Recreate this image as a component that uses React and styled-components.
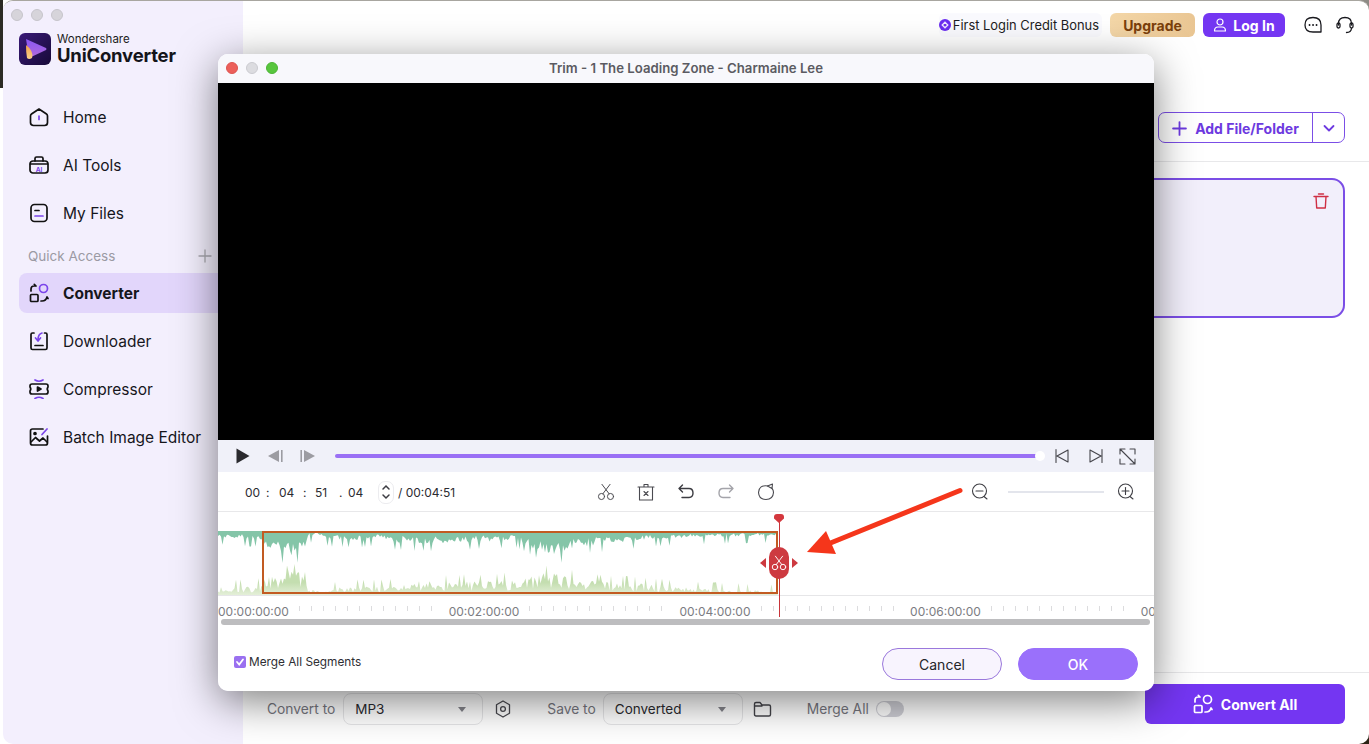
import React from 'react'
import styled, { createGlobalStyle } from 'styled-components'

const GlobalStyle = createGlobalStyle`
  html, body { margin: 0; padding: 0; height: 100%; overflow: hidden; }
  * { box-sizing: border-box; }
  body { font-family: Inter, "Liberation Sans", sans-serif; color: #16161a; }
`

const Page = styled.div`
  position: relative;
  width: 1369px;
  height: 744px;
  overflow: hidden;
  padding-left: 3px;
  background:
    linear-gradient(#2c2b24, #2c2b24) 0 0 / 3px 88px no-repeat,
    linear-gradient(#2c2415, #2c2415) 100% 100% / 12px 12px no-repeat,
    linear-gradient(#8d8b85, #8d8b85) 100% 0 / 12px 12px no-repeat,
    #fff;
`
const AppWindow = styled.div`
  display: flex;
  width: 1366px;
  height: 744px;
  border-radius: 10px;
  border-top: 1px solid #a8a6a0;
  overflow: hidden;
  background: #fff;
`
const Sidebar = styled.aside`
  width: 240px;
  flex: none;
  background: #f3effd;
  display: flex;
  flex-direction: column;
  padding: 8px 0 0 16px;
`
const Traffic = styled.div`
  display: flex;
  gap: 8px;
  margin-left: -8px;
`
const Dot = styled.span`
  width: ${p => p.$size || 12}px;
  height: ${p => p.$size || 12}px;
  border-radius: 50%;
  background: ${p => p.$color || '#d6d4da'};
  border: 1px solid ${p => p.$edge || '#c6c4cb'};
`
const Brand = styled.div`
  display: flex;
  gap: 6px;
  align-items: center;
  margin-top: 12px;
  height: 32px;
`
const BrandText = styled.div`
  display: flex;
  flex-direction: column;
  line-height: 1;
`
const BrandTop = styled.span`
  font-size: 11.5px;
  color: #1c1c22;
  margin-bottom: 1px;
`
const BrandName = styled.span`
  font-size: 18.5px;
  font-weight: 700;
  letter-spacing: -0.2px;
  color: #14141a;
`
const Nav = styled.nav`
  display: flex;
  flex-direction: column;
  margin-top: 28px;
`
const NavItem = styled.div`
  display: flex;
  align-items: center;
  gap: 14px;
  height: ${p => (p.$active ? 40 : 48)}px;
  margin: ${p => (p.$active ? '0 0 4px' : '0')};
  padding-left: 10px;
  border-radius: 8px 0 0 8px;
  font-size: 15.5px;
  font-weight: ${p => (p.$active ? 700 : 400)};
  background: ${p => (p.$active ? '#e2d6fb' : 'transparent')};
  color: #16161c;
`
const SectionRow = styled.div`
  display: flex;
  justify-content: space-between;
  align-items: center;
  height: 30px;
  margin: 4px 0 2px;
  padding: 0 31px 0 9px;
  font-size: 13.5px;
  color: #9b9aa3;
`
const Main = styled.main`
  flex: 1;
  display: flex;
  flex-direction: column;
  min-width: 0;
`
const TopBar = styled.header`
  display: flex;
  align-items: center;
  justify-content: flex-end;
  height: 48px;
  padding-right: 15px;
`
const BonusPill = styled.div`
  display: flex;
  align-items: center;
  gap: 2px;
  height: 24px;
  padding: 0 3px 0 0;
  border-radius: 6px;
  font-size: 12.9px;
  color: #1d1d22;
  background: #fafafe;
`
const Upgrade = styled.button`
  width: 85px;
  height: 24px;
  margin-left: 8px;
  border: 0;
  border-radius: 6px;
  font: 700 14px Inter, sans-serif;
  color: #7a3f0c;
  background: linear-gradient(100deg, #f4d7a8, #e9c592);
`
const LogIn = styled.button`
  display: flex;
  align-items: center;
  justify-content: center;
  gap: 6px;
  width: 82px;
  height: 24px;
  margin-left: 8px;
  border: 0;
  border-radius: 6px;
  font: 700 14px Inter, sans-serif;
  color: #fff;
  background: #7436f2;
`
const TopIcons = styled.div`
  display: flex;
  gap: 14px;
  margin-left: 19px;
`
const Toolbar = styled.div`
  display: flex;
  align-items: flex-end;
  justify-content: flex-end;
  height: 113px;
  padding: 0 24px 18px 0;
  border-bottom: 1px solid #e8e8ea;
`
const AddGroup = styled.div`
  display: flex;
  height: 31px;
  width: 187px;
  border: 1.5px solid #7b4ee6;
  border-radius: 7px;
  color: #6d3ae0;
`
const AddMain = styled.div`
  flex: 1;
  display: flex;
  align-items: center;
  justify-content: center;
  gap: 8px;
  padding-top: 1px;
  font-size: 14px;
  font-weight: 700;
  border-right: 1px solid #7b4ee6;
`
const AddMore = styled.div`
  width: 31px;
  display: flex;
  align-items: center;
  justify-content: center;
`
const Content = styled.div`
  flex: 1;
  padding: 16px 24px 0;
`
const FileCard = styled.div`
  display: flex;
  justify-content: flex-end;
  height: 140px;
  padding: 13px 14px;
  border: 2px solid #7b4ee6;
  border-radius: 13px;
  background: #f2effb;
`
const BottomBar = styled.footer`
  display: flex;
  justify-content: space-between;
  align-items: flex-start;
  height: 72px;
  padding: 11px 24px 0;
  border-top: 1px solid #e8e8ea;
`
const BottomLeft = styled.div`
  display: flex;
  align-items: center;
  margin-top: 9px;
  height: 32px;
  font-size: 13.8px;
  color: #77777f;
`
const Select = styled.div`
  display: flex;
  align-items: center;
  justify-content: space-between;
  width: 140px;
  height: 32px;
  margin-left: ${p => p.$gap}px;
  padding: 0 16px 0 11px;
  border: 1px solid #e6e6e8;
  border-radius: 8px;
  font-size: 13.5px;
  color: #2b2b30;
`
const Caret = styled.span`
  width: 0;
  height: 0;
  border-left: 4.5px solid transparent;
  border-right: 4.5px solid transparent;
  border-top: 5px solid #85858c;
`
const BarIcon = styled.span`
  display: flex;
  margin-left: ${p => p.$left}px;
  margin-right: ${p => p.$right}px;
`
const Toggle = styled.span`
  position: relative;
  display: block;
  width: 28px;
  height: 16px;
  margin-left: 7px;
  border-radius: 8px;
  background: #cfcfd6;
  &::after {
    content: '';
    position: absolute;
    left: 1px;
    top: 1px;
    width: 14px;
    height: 14px;
    border-radius: 50%;
    background: #fff;
  }
`
const ConvertAll = styled.button`
  display: flex;
  align-items: center;
  justify-content: center;
  gap: 8px;
  width: 200px;
  height: 40px;
  border: 0;
  border-radius: 6px;
  font: 700 14px Inter, sans-serif;
  color: #fff;
  background: #7436f2;
`

/* trim dialog, floats over the app window */
const Modal = styled.section`
  position: absolute;
  left: 218px;
  top: 54px;
  width: 936px;
  height: 637px;
  display: flex;
  flex-direction: column;
  border-radius: 10px;
  overflow: hidden;
  background: #fff;
`
const ModalShadow = styled.div`
  position: absolute;
  left: 218px;
  top: 54px;
  width: 936px;
  height: 637px;
  border-radius: 10px;
  box-shadow: 0 10px 42px rgba(0, 0, 0, 0.5);
`
const TitleBar = styled.div`
  position: relative;
  height: 29px;
  flex: none;
  display: flex;
  align-items: center;
  justify-content: center;
  padding-bottom: 1px;
  background: #f8f8fc;
  font-size: 13.2px;
  font-weight: 600;
  color: #5b5b62;
`
const ModalDots = styled.div`
  position: absolute;
  left: 8px;
  top: 8px;
  display: flex;
  gap: 8px;
`
const Video = styled.div`
  height: 357px;
  flex: none;
  background: #000;
`
const Controls = styled.div`
  height: 32px;
  flex: none;
  display: flex;
  align-items: center;
  padding-left: 18px;
  background: #f0f1f9;
`
const StepGroup = styled.div`
  display: flex;
  align-items: center;
  gap: 17px;
  margin-left: 17px;
`
const Progress = styled.div`
  position: relative;
  width: 705px;
  height: 4px;
  margin: 0 14px 0 19px;
  border-radius: 2px;
  background: #9a70f5;
  &::after {
    content: '';
    position: absolute;
    right: -5px;
    top: -3px;
    width: 10px;
    height: 10px;
    border-radius: 50%;
    background: #fff;
  }
`
const IconGroup = styled.div`
  display: flex;
  align-items: center;
  gap: ${p => p.$gap}px;
`
const FullSlot = styled.span`
  display: flex;
  margin-left: 15px;
`
const TimeRow = styled.div`
  height: 40px;
  flex: none;
  display: flex;
  align-items: center;
  padding: 1px 19px 0 0;
  border-bottom: 1px solid #e8e8ea;
`
const TimeLeft = styled.div`
  width: 379px;
  display: flex;
  align-items: center;
  padding-left: 27px;
  font-size: 12px;
  color: #2b2b30;
`
const TimeCell = styled.span`
  width: ${p => p.$w}px;
`
const Spinner = styled.div`
  display: flex;
  align-items: center;
  justify-content: center;
  width: 16px;
  height: 23px;
  margin: 0 4px 0 8px;
  border: 1px solid #ececef;
  border-radius: 7px;
`
const ZoomTools = styled.div`
  margin-left: auto;
  display: flex;
  align-items: center;
`
const ZoomTrack = styled.div`
  width: 96px;
  height: 2px;
  margin: 0 13px 0 19px;
  background: #e3e5ec;
`
const Timeline = styled.div`
  position: relative;
  flex: none;
  height: 105px;
  padding-top: 19px;
`
const WaveBox = styled.div`
  height: 65px;
  border-bottom: 1px solid #e6e6e8;
`
const Ruler = styled.div`
  display: flex;
  height: 21px;
  overflow: hidden;
`
const RulerCell = styled.div`
  flex: none;
  width: 230.7px;
  display: flex;
  align-items: center;
  font-size: 12px;
  color: #7c7c82;
  padding-top: 9px;
`
const RulerTicks = styled.div`
  flex: 1;
  height: 5px;
  margin: -5px 8px 0 10px;
  background: repeating-linear-gradient(90deg, #dcdcde 0 1px, transparent 1px 12px);
`
const Selection = styled.div`
  position: absolute;
  left: 44px;
  top: 19px;
  width: 516px;
  height: 63px;
  border: 2px solid #c25b22;
`
const PlayLine = styled.div`
  position: absolute;
  left: 561px;
  top: 4px;
  bottom: 0;
  width: 1px;
  background: #c8343a;
`
const PlayPin = styled.div`
  position: absolute;
  left: 556px;
  top: 2px;
  width: 10px;
  height: 9px;
  border-radius: 3px 3px 0 0;
  background: #d4383e;
  clip-path: polygon(0 0, 100% 0, 100% 50%, 50% 100%, 0 50%);
`
const Handle = styled.div`
  position: absolute;
  left: 551px;
  top: 35px;
  width: 20px;
  height: 32px;
  border-radius: 10px;
  display: flex;
  align-items: center;
  justify-content: center;
  background: #cd3a40;
`
const HandleArrow = styled.span`
  position: absolute;
  top: 46px;
  left: ${p => p.$left}px;
  width: 0;
  height: 0;
  border-top: 5px solid transparent;
  border-bottom: 5px solid transparent;
  ${p => (p.$dir === 'left' ? 'border-right: 6px solid #cd3a40;' : 'border-left: 6px solid #cd3a40;')}
`
const Scroll = styled.div`
  flex: none;
  height: 6px;
  margin: 2px 4px 0 3px;
  border-radius: 3px;
  background: #bdbdbf;
`
const ModalFooter = styled.div`
  flex: 1;
  display: flex;
  align-items: center;
  justify-content: space-between;
  padding: 0 16px 0 16px;
`
const MergeLabel = styled.label`
  display: flex;
  align-items: center;
  gap: 3px;
  font-size: 11.8px;
  color: #2e2e33;
  margin-top: 8px;
`
const CheckBox = styled.span`
  display: flex;
  align-items: center;
  justify-content: center;
  width: 12px;
  height: 12px;
  border-radius: 2px;
  background: #9a70f0;
`
const FooterButtons = styled.div`
  display: flex;
  gap: 16px;
  margin-top: 12px;
`
const PillButton = styled.button`
  width: 120px;
  height: 32px;
  border-radius: 16px;
  font: 400 14px Inter, sans-serif;
  color: ${p => (p.$primary ? '#fff' : '#25252a')};
  background: ${p => (p.$primary ? '#9a70fb' : '#f8f4fe')};
  border: 1px solid ${p => (p.$primary ? '#9a70fb' : '#9a78dc')};
  font-weight: ${p => (p.$primary ? 500 : 400)};
`
const Annotation = styled.svg`
  position: absolute;
  left: 800px;
  top: 484px;
`

const Ico = ({ size = 20, sw = 1.7, color = 'currentColor', children, box = 20 }) => (
  <svg width={size} height={size} viewBox={`0 0 ${box} ${box}`} fill="none" stroke={color} strokeWidth={sw} strokeLinecap="round" strokeLinejoin="round">
    {children}
  </svg>
)

const PURPLE = '#7b45ea'

const LogoMark = () => (
  <svg width="32" height="32" viewBox="0 0 32 32">
    <defs>
      <linearGradient id="lg-bg" x1="0" y1="0" x2="1" y2="1">
        <stop offset="0" stopColor="#3a1a78" />
        <stop offset="1" stopColor="#170a38" />
      </linearGradient>
      <linearGradient id="lg-a" x1="0" y1="0" x2="0" y2="1">
        <stop offset="0" stopColor="#8a56f5" />
        <stop offset="1" stopColor="#b26bd9" />
      </linearGradient>
      <linearGradient id="lg-b" x1="0" y1="0" x2="0" y2="1">
        <stop offset="0" stopColor="#f5a24a" />
        <stop offset="1" stopColor="#f7d08a" />
      </linearGradient>
    </defs>
    <rect width="32" height="32" rx="6" fill="url(#lg-bg)" />
    <path d="M7 6 L27 15 Q28 16 27 17 L10 25 Z" fill="url(#lg-a)" />
    <path d="M7 12 Q15 18 13 25 Q10 27 8 25 Q7 20 7 12 Z" fill="url(#lg-b)" />
  </svg>
)

const HomeIcon = () => (
  <Ico>
    <path d="M10 2 L17.5 7 Q18.5 7.7 18.5 9 V15.5 Q18.5 18.5 15.5 18.5 H4.5 Q1.5 18.5 1.5 15.5 V9 Q1.5 7.7 2.5 7 Z" stroke="#111" />
    <path d="M10 9 V12.5" stroke={PURPLE} />
  </Ico>
)
const AiIcon = () => (
  <Ico>
    <path d="M6 6 V3.5 Q6 2 7.5 2 H12.5 Q14 2 14 3.5 V6" stroke="#111" />
    <rect x="1" y="6" width="18" height="12" rx="3" stroke="#111" />
    <path d="M1.5 9 H18.5" stroke="#111" />
    <text x="10" y="16.5" fontSize="6.5" fontWeight="700" fill={PURPLE} stroke="none" textAnchor="middle" fontFamily="Inter">AI</text>
  </Ico>
)
const FilesIcon = () => (
  <Ico>
    <rect x="2" y="1.5" width="16" height="17" rx="3.5" stroke="#111" />
    <path d="M6 7.5 H10" stroke="#111" />
    <path d="M6 13 H14" stroke={PURPLE} />
  </Ico>
)
const ConvertIcon = ({ light }) => {
  const main = light ? '#fff' : '#111'
  return (
    <Ico>
      <circle cx="14.5" cy="5.5" r="4" stroke={light ? '#fff' : PURPLE} />
      <rect x="1.5" y="11.5" width="7.5" height="7" rx="1" stroke={main} />
      <path d="M2 8 V6 Q2 3 5 3 H7 M7 3 L5.3 1.3 M12 18 H13 Q17 18 18 14 M18 14 L19 15.5" stroke={main} />
    </Ico>
  )
}
const DownIcon = () => (
  <Ico>
    <path d="M5 2 H3.5 Q2 2 2 3.5 V17 Q2 18.5 3.5 18.5 H16.5 Q18 18.5 18 17 V3.5 Q18 2 16.5 2 H15.5" stroke="#111" />
    <path d="M6 14.5 H14" stroke="#111" />
    <path d="M13 2 Q9 3 9 9 M6.5 7 L9 10 L11.5 7" stroke={PURPLE} />
  </Ico>
)
const CompressIcon = () => (
  <Ico>
    <path d="M6 1 Q10 3.5 14 1 M6 19.5 Q10 17 14 19.5" stroke={PURPLE} />
    <path d="M3 5 H17 Q19 5 19 7 V8 Q17.5 10 19 12 V13 Q19 15 17 15 H3 Q1 15 1 13 V12 Q2.5 10 1 8 V7 Q1 5 3 5 Z" stroke="#111" />
    <path d="M8.5 8 L12 10 L8.5 12 Z" fill="#111" stroke="#111" />
  </Ico>
)
const BatchIcon = () => (
  <Ico>
    <path d="M14 2 H3.5 Q1.5 2 1.5 4 V16 Q1.5 18 3.5 18 H16.5 Q18.5 18 18.5 16 V9" stroke="#111" />
    <circle cx="6" cy="6.5" r="1" fill="#111" stroke="#111" />
    <path d="M2 15 L6.5 10.5 L10.5 14 L14 11 L18 15" stroke="#111" />
    <path d="M13 7.5 L18 2" stroke={PURPLE} />
  </Ico>
)
const PlusIcon = ({ size = 14, color = '#a9a8b0', sw = 1.3 }) => (
  <Ico size={size} color={color} sw={sw} box={14}>
    <path d="M7 1 V13 M1 7 H13" />
  </Ico>
)
const DiamondBadge = () => (
  <svg width="12" height="12" viewBox="0 0 12 12">
    <circle cx="6" cy="6" r="6" fill="#6a2df0" />
    <path d="M6 3.2 L8.8 6 L6 8.8 L3.2 6 Z" fill="none" stroke="#f0e8ff" strokeWidth="1.3" />
  </svg>
)
const UserIcon = () => (
  <Ico size={14} box={14} sw={1.2} color="#fff">
    <circle cx="7" cy="4" r="3" />
    <path d="M1.5 13 Q1.5 9 5 9 H9 Q12.5 9 12.5 13 Z" />
  </Ico>
)
const ChatIcon = () => (
  <Ico size={18} box={18} sw={1.3} color="#1a1a1f">
    <path d="M9 1.5 Q17 1.5 17 9 V16 H9 Q1 16 1 9 Q1 1.5 9 1.5 Z" />
    <path d="M5.5 9 H5.6 M9 9 H9.1 M12.5 9 H12.6" strokeWidth="1.8" />
  </Ico>
)
const HeadsetIcon = () => (
  <Ico size={18} box={18} sw={1.3} color="#1a1a1f">
    <path d="M2.5 9 V7.5 Q2.5 1.5 9 1.5 Q15.5 1.5 15.5 7.5 V9" />
    <rect x="1" y="7" width="3" height="5" rx="1.5" />
    <rect x="14" y="7" width="3" height="5" rx="1.5" />
    <path d="M15.5 12.5 Q15 16.5 10.5 16.5" />
  </Ico>
)
const ChevronIcon = () => (
  <Ico size={14} box={14} sw={1.8} color="#6d3ae0">
    <path d="M2.5 5 L7 9.5 L11.5 5" />
  </Ico>
)
const TrashIcon = () => (
  <Ico size={16} box={16} sw={1.4} color="#cf2f44">
    <path d="M1 3.5 H15 M5.5 1 H10.5 M3 3.5 L3.7 15 H12.3 L13 3.5" />
  </Ico>
)
const HexIcon = () => (
  <Ico size={18} box={18} sw={1.3} color="#4a4a50">
    <path d="M9 1 L15.5 4.7 V13.3 L9 17 L2.5 13.3 V4.7 Z" />
    <circle cx="9" cy="9" r="2.4" />
  </Ico>
)
const FolderIcon = () => (
  <Ico size={19} box={19} sw={1.4} color="#45454b">
    <path d="M1.5 4 Q1.5 2.5 3 2.5 H7 L9 5 H16 Q17.5 5 17.5 6.5 V14.5 Q17.5 16 16 16 H3 Q1.5 16 1.5 14.5 Z M1.5 6 H9" />
  </Ico>
)
const PlayIcon = () => (
  <svg width="14" height="16" viewBox="0 0 14 16"><path d="M0.5 0.5 L13.5 8 L0.5 15.5 Z" fill="#2a2a2e" /></svg>
)
const StepIcon = ({ flip }) => (
  <svg width="16" height="14" viewBox="0 0 16 14">
    <g transform={flip ? 'matrix(-1 0 0 1 16 0)' : undefined}>
      <path d="M12 1 V13 L1 7 Z" fill="#9c9ca2" />
      <rect x="14" y="1" width="1.6" height="12" fill="#9c9ca2" />
    </g>
  </svg>
)
const EdgeIcon = ({ flip }) => (
  <Ico size={16} box={16} sw={1.1} color="#46464c">
    <g transform={flip ? 'matrix(-1 0 0 1 16 0)' : undefined}>
      <path d="M2 1.5 V14.5 M14 2 V14 L3 8 Z" />
    </g>
  </Ico>
)
const FullIcon = () => (
  <Ico size={17} box={17} sw={1.1} color="#46464c">
    <path d="M1 6 V1 H6 M11 1 H16 V6 M1 11 V16 H6 M11 16 H16 V11 M1 1 L16 16" />
  </Ico>
)
const ScissorIcon = ({ size = 20, color = '#4a4a50', sw = 1.1 }) => (
  <Ico size={size} box={20} sw={sw} color={color}>
    <circle cx="5" cy="15" r="3.4" />
    <circle cx="15" cy="15" r="3.4" />
    <path d="M6.5 12 L14.5 1.5 M13.5 12 L5.5 1.5" />
  </Ico>
)
const ClipTrash = () => (
  <Ico size={18} box={18} sw={1.1} color="#4a4a50">
    <path d="M2.5 4 H15.5 V17 H2.5 Z M7 4 V1.5 H11 V4 M1 4 H17 M7 8.5 L11 12.5 M11 8.5 L7 12.5" />
  </Ico>
)
const UndoIcon = ({ flip, color = '#3c3c42' }) => (
  <Ico size={18} box={18} sw={1.4} color={color}>
    <g transform={flip ? 'matrix(-1 0 0 1 18 0)' : undefined}>
      <path d="M5.5 2 L2 5.5 L5.5 9 M2 5.5 H12 Q16 5.5 16 10 Q16 14.5 12 14.5 H5" />
    </g>
  </Ico>
)
const ResetIcon = () => (
  <Ico size={18} box={18} sw={1.1} color="#4a4a50">
    <path d="M11 3 Q2 1.5 1.5 9.5 Q2 16.5 9 16.5 Q16 16.5 16.5 9.5 Q16.5 7 15 5.5" />
    <path d="M10.5 3 L15.5 1 L15 5.5 Z" />
  </Ico>
)
const ZoomIcon = ({ plus }) => (
  <Ico size={18} box={18} sw={1.1} color="#3f3f45">
    <circle cx="8.5" cy="8" r="7" />
    <path d="M5 8 H12 M13 13.5 L16 16" />
    {plus && <path d="M8.5 4.5 V11.5" />}
  </Ico>
)
const SpinIcon = () => (
  <svg width="10" height="16" viewBox="0 0 10 16" fill="none" stroke="#3c3c42" strokeWidth="1.5" strokeLinecap="round">
    <path d="M2 5 L5 2 L8 5 M2 11 L5 14 L8 11" />
  </svg>
)
const CheckMark = () => (
  <svg width="10" height="10" viewBox="0 0 10 10" fill="none" stroke="#fff" strokeWidth="1.8" strokeLinecap="round">
    <path d="M2 5 L4.2 7.5 L8 2.5" />
  </svg>
)

/* audio envelopes: [x, depth], x measured from the dialog's left edge */
const TOP_ENV = [
  [0, 6], [44, 8], [48, 20], [60, 23], [85, 22], [90, 5], [100, 3], [112, 8], [125, 8], [140, 9],
  [160, 7], [180, 11], [230, 12], [260, 10], [300, 9], [320, 19], [345, 23], [360, 15], [420, 9],
  [470, 6], [520, 5], [560, 4],
]
const LOW_ENV = [
  [0, 8], [40, 9], [48, 18], [60, 22], [85, 22], [90, 5], [112, 5], [125, 8], [180, 9], [200, 13],
  [260, 13], [300, 15], [320, 21], [345, 21], [360, 14], [420, 11], [470, 7], [520, 5], [560, 4],
]
const envelopeAt = (env, x) => {
  for (let i = 1; i < env.length; i++) {
    const [x0, y0] = env[i - 1]
    const [x1, y1] = env[i]
    if (x <= x1) return y0 + ((y1 - y0) * (x - x0)) / (x1 - x0)
  }
  return 3
}
const noise = i => {
  const v = Math.sin(i * 12.9898) * 43758.5453
  return v - Math.floor(v)
}
const wavePath = (env, baseline, dir, seed, floor, boost) => {
  let d = `M0 ${baseline}`
  for (let x = 0; x <= 560; x += 1.5) {
    const spike = noise(x + seed)
    const depth = envelopeAt(env, x) * (floor + spike * (1.15 - floor)) + (spike > 0.9 ? boost : 0)
    d += ` L${x} ${(baseline + dir * depth).toFixed(1)}`
  }
  return `${d} L560 ${baseline} Z`
}
const TOP_WAVE = wavePath(TOP_ENV, 0, 1, 3, 0.45, 7)
const BOTTOM_WAVE = wavePath(LOW_ENV, 64, -1, 91, 0.3, 6)

const Waveform = () => (
  <svg width="560" height="64" viewBox="0 0 560 64" style={{ display: 'block' }}>
    <defs>
      <linearGradient id="wave-low" x1="0" y1="0" x2="0" y2="1">
        <stop offset="0.6" stopColor="#c4deb0" />
        <stop offset="1" stopColor="#e4efd8" />
      </linearGradient>
    </defs>
    <path d={TOP_WAVE} fill="#84c5a8" />
    <path d={BOTTOM_WAVE} fill="url(#wave-low)" />
  </svg>
)

const navTop = [
  { label: 'Home', icon: <HomeIcon /> },
  { label: 'AI Tools', icon: <AiIcon /> },
  { label: 'My Files', icon: <FilesIcon /> },
]
const navTools = [
  { label: 'Converter', icon: <ConvertIcon />, active: true },
  { label: 'Downloader', icon: <DownIcon /> },
  { label: 'Compressor', icon: <CompressIcon /> },
  { label: 'Batch Image Editor', icon: <BatchIcon /> },
]
const rulerLabels = ['00:00:00:00', '00:02:00:00', '00:04:00:00', '00:06:00:00', '00:08:00:00']

const App = () => (
  <Page>
    <GlobalStyle />
    <AppWindow>
      <Sidebar>
        <Traffic>
          <Dot /><Dot /><Dot />
        </Traffic>
        <Brand>
          <LogoMark />
          <BrandText>
            <BrandTop>Wondershare</BrandTop>
            <BrandName>UniConverter</BrandName>
          </BrandText>
        </Brand>
        <Nav>
          {navTop.map(n => (
            <NavItem key={n.label}>{n.icon}{n.label}</NavItem>
          ))}
          <SectionRow>Quick Access<PlusIcon /></SectionRow>
          {navTools.map(n => (
            <NavItem key={n.label} $active={n.active}>{n.icon}{n.label}</NavItem>
          ))}
        </Nav>
      </Sidebar>
      <Main>
        <TopBar>
          <BonusPill><DiamondBadge />First Login Credit Bonus</BonusPill>
          <Upgrade>Upgrade</Upgrade>
          <LogIn><UserIcon />Log In</LogIn>
          <TopIcons><ChatIcon /><HeadsetIcon /></TopIcons>
        </TopBar>
        <Toolbar>
          <AddGroup>
            <AddMain><PlusIcon size={15} color="#6d3ae0" sw={1.7} />Add File/Folder</AddMain>
            <AddMore><ChevronIcon /></AddMore>
          </AddGroup>
        </Toolbar>
        <Content>
          <FileCard><TrashIcon /></FileCard>
        </Content>
        <BottomBar>
          <BottomLeft>
            Convert to
            <Select $gap={8}>MP3<Caret /></Select>
            <BarIcon $left={11} $right={35}><HexIcon /></BarIcon>
            Save to
            <Select $gap={7}>Converted<Caret /></Select>
            <BarIcon $left={10} $right={35}><FolderIcon /></BarIcon>
            Merge All
            <Toggle />
          </BottomLeft>
          <ConvertAll><ConvertIcon light />Convert All</ConvertAll>
        </BottomBar>
      </Main>
    </AppWindow>

    <ModalShadow />
    <Modal>
      <TitleBar>
        <ModalDots>
          <Dot $color="#ec5f5a" $edge="#dd5450" />
          <Dot $color="#dcdce0" $edge="#cbcbd0" />
          <Dot $color="#58c63e" $edge="#4db536" />
        </ModalDots>
        Trim - 1 The Loading Zone - Charmaine Lee
      </TitleBar>
      <Video />
      <Controls>
        <PlayIcon />
        <StepGroup>
          <StepIcon />
          <StepIcon flip />
        </StepGroup>
        <Progress />
        <IconGroup $gap={18}>
          <EdgeIcon />
          <EdgeIcon flip />
        </IconGroup>
        <FullSlot><FullIcon /></FullSlot>
      </Controls>
      <TimeRow>
        <TimeLeft>
          <TimeCell $w={21}>00</TimeCell>
          <TimeCell $w={13}>:</TimeCell>
          <TimeCell $w={24}>04</TimeCell>
          <TimeCell $w={12}>:</TimeCell>
          <TimeCell $w={24}>51</TimeCell>
          <TimeCell $w={9}>.</TimeCell>
          <TimeCell $w={22}>04</TimeCell>
          <Spinner><SpinIcon /></Spinner>
          / 00:04:51
        </TimeLeft>
        <IconGroup $gap={22}>
          <ScissorIcon size={18} />
          <ClipTrash />
          <UndoIcon />
          <UndoIcon flip color="#a4a4aa" />
          <ResetIcon />
        </IconGroup>
        <ZoomTools>
          <ZoomIcon />
          <ZoomTrack />
          <ZoomIcon plus />
        </ZoomTools>
      </TimeRow>
      <Timeline>
        <WaveBox><Waveform /></WaveBox>
        <Ruler>
          {rulerLabels.map(t => (
            <RulerCell key={t}>{t}<RulerTicks /></RulerCell>
          ))}
        </Ruler>
        <Selection />
        <PlayLine />
        <PlayPin />
        <HandleArrow $dir="left" $left={542} />
        <Handle><ScissorIcon size={16} color="#fff" sw={1.2} /></Handle>
        <HandleArrow $dir="right" $left={574} />
      </Timeline>
      <Scroll />
      <ModalFooter>
        <MergeLabel>
          <CheckBox><CheckMark /></CheckBox>
          Merge All Segments
        </MergeLabel>
        <FooterButtons>
          <PillButton>Cancel</PillButton>
          <PillButton $primary>OK</PillButton>
        </FooterButtons>
      </ModalFooter>
    </Modal>

    <Annotation width="170" height="75" viewBox="0 0 170 75">
      <path d="M160 6.5 L28 60" stroke="#f5361b" strokeWidth="5" strokeLinecap="round" />
      <path d="M7 68 L26 47 L36 70 Z" fill="#f5361b" />
    </Annotation>
  </Page>
)

export default App
